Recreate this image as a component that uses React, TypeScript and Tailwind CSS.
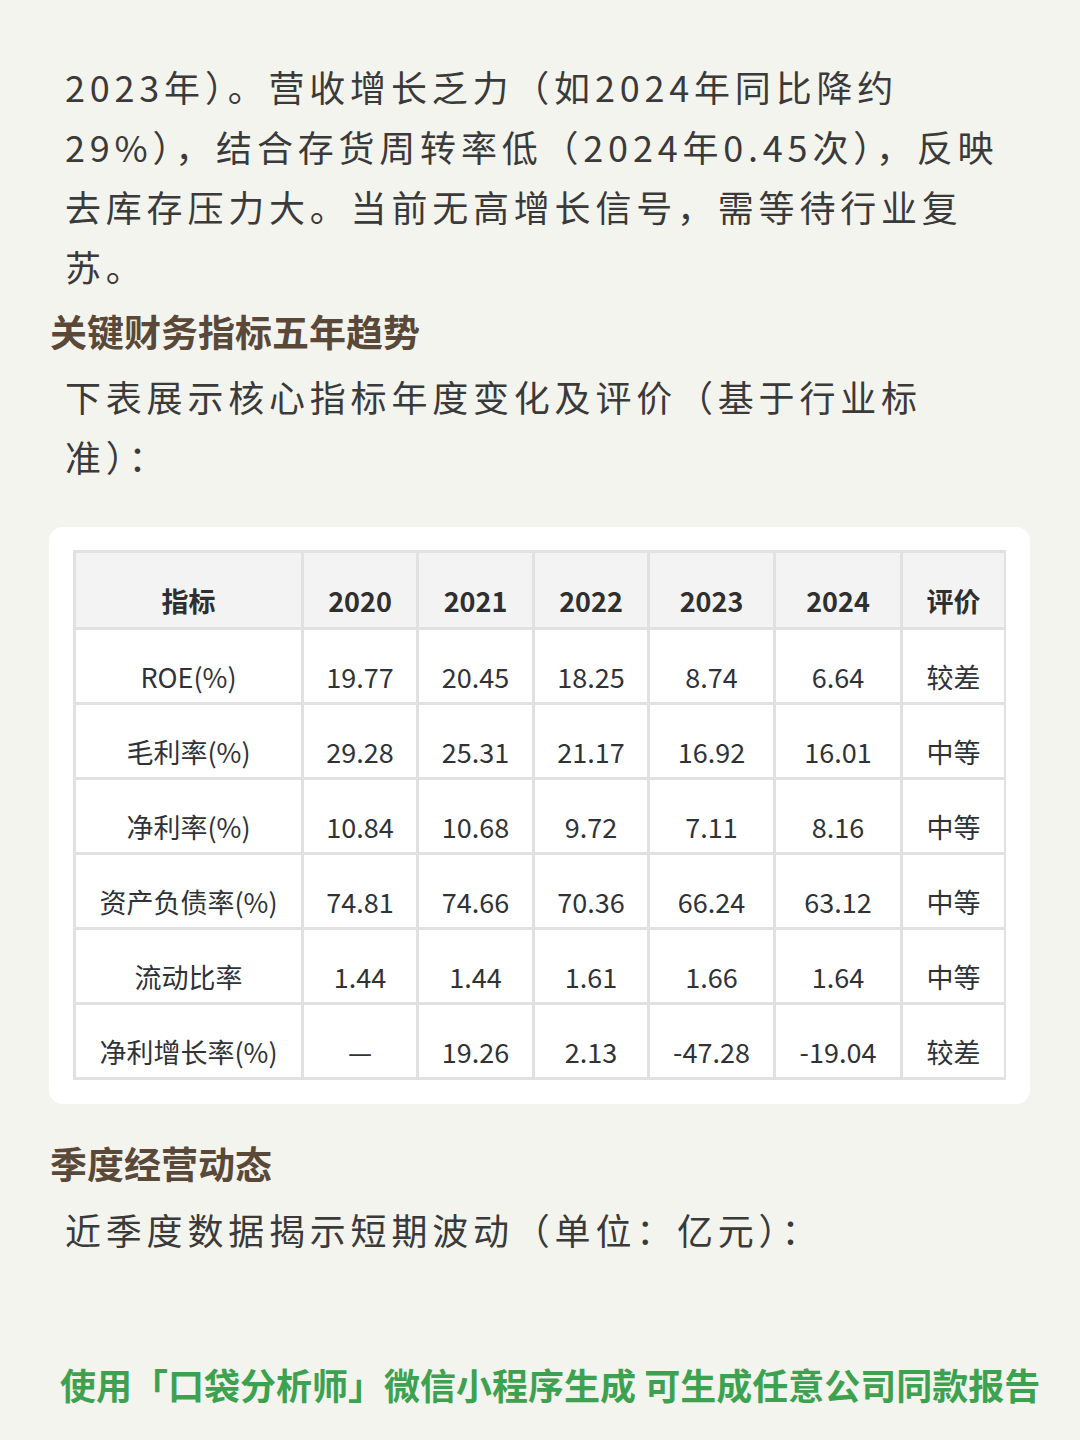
import { Fragment } from 'react';

const font = { fontFamily: '"Noto Sans CJK SC", "Noto Sans", sans-serif' };

const years = ['2020', '2021', '2022', '2023', '2024'];

const rows: { name: string; values: string[]; rating: string }[] = [
  { name: 'ROE(%)', values: ['19.77', '20.45', '18.25', '8.74', '6.64'], rating: '较差' },
  { name: '毛利率(%)', values: ['29.28', '25.31', '21.17', '16.92', '16.01'], rating: '中等' },
  { name: '净利率(%)', values: ['10.84', '10.68', '9.72', '7.11', '8.16'], rating: '中等' },
  { name: '资产负债率(%)', values: ['74.81', '74.66', '70.36', '66.24', '63.12'], rating: '中等' },
  { name: '流动比率', values: ['1.44', '1.44', '1.61', '1.66', '1.64'], rating: '中等' },
  { name: '净利增长率(%)', values: ['—', '19.26', '2.13', '-47.28', '-19.04'], rating: '较差' },
];

function HeadCell({ children }: { children: React.ReactNode }) {
  return (
    <div className="h-[74px] bg-[#f3f3f3] flex items-end justify-center pb-[10px] text-[27px] leading-[32px] font-bold text-[#2f2f2f]">
      {children}
    </div>
  );
}

function Cell({ children }: { children: React.ReactNode }) {
  return (
    <div className="h-[72px] bg-white flex items-end justify-center pb-[9px] text-[27px] leading-[32px] text-[#2f3338] whitespace-nowrap">
      {children}
    </div>
  );
}

export default function App() {
  return (
    <div className="min-h-[1440px] bg-[#f4f4ef] pt-[56px]" style={font}>
      <p className="pl-[65px] text-[36px] leading-[60px] tracking-[4.8px] text-[#3a3a3a]">
        2023年）。营收增长乏力（如2024年同比降约
        <br />
        29%），结合存货周转率低（2024年0.45次），反映
        <br />
        去库存压力大。当前无高增长信号，需等待行业复
        <br />
        苏。
      </p>

      <h2 className="mt-[10px] pl-[50px] text-[37px] leading-[50px] font-bold text-[#5a4838]">
        关键财务指标五年趋势
      </h2>
      <p className="mt-[10px] pl-[65px] text-[36px] leading-[60px] tracking-[4.8px] text-[#3a3a3a]">
        下表展示核心指标年度变化及评价（基于行业标
        <br />
        准）：
      </p>

      <div className="mt-[41px] ml-[49px] w-[981px] bg-white rounded-[14px] px-[24px] pt-[23px] pb-[24px]">
        <div className="grid grid-cols-[225px_112px_113px_112px_123px_124px_101px] gap-[3px] p-[3px] bg-[#e1e1e1]">
          <HeadCell>指标</HeadCell>
          {years.map((y) => (
            <HeadCell key={y}>{y}</HeadCell>
          ))}
          <HeadCell>评价</HeadCell>
          {rows.map((r) => (
            <Fragment key={r.name}>
              <Cell>{r.name}</Cell>
              {r.values.map((v, i) => (
                <Cell key={i}>{v}</Cell>
              ))}
              <Cell>{r.rating}</Cell>
            </Fragment>
          ))}
        </div>
      </div>

      <h2 className="mt-[34px] pl-[50px] text-[37px] leading-[50px] font-bold text-[#5a4838]">
        季度经营动态
      </h2>
      <p className="mt-[11px] pl-[65px] text-[36px] leading-[60px] tracking-[4.8px] text-[#3a3a3a]">
        近季度数据揭示短期波动（单位：亿元）：
      </p>

      <p className="mt-[100px] pl-[60px] text-[36px] leading-[50px] font-bold text-[#3da24f] whitespace-nowrap">
        使用「口袋分析师」微信小程序生成 可生成任意公司同款报告
      </p>
    </div>
  );
}
